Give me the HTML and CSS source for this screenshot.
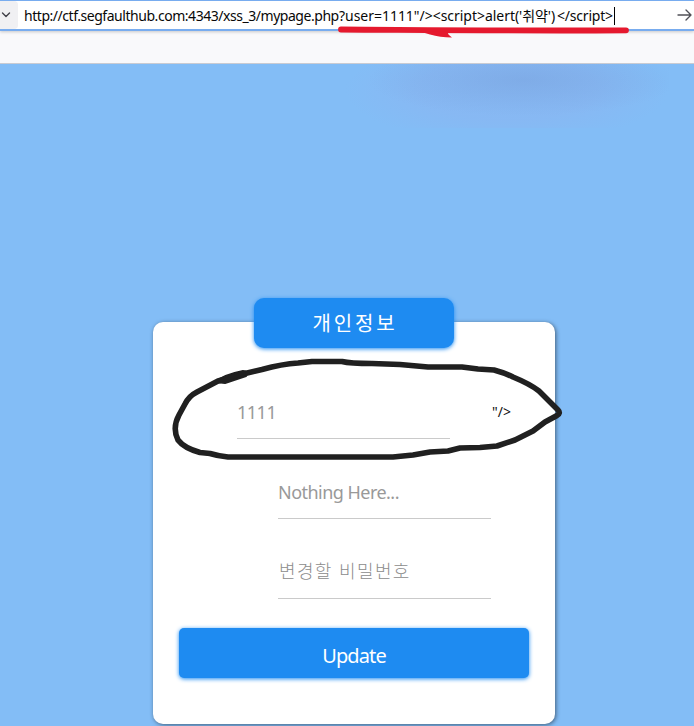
FILE: index.html
```html
<!DOCTYPE html>
<html lang="ko">
<head>
<meta charset="utf-8">
<title>개인정보</title>
<link rel="stylesheet" href="styles.css">
</head>
<body>
<header class="browser-bar">
  <div class="address">
    <div class="dropdown"><svg width="10" height="6" viewBox="0 0 10 6"><path d="M1.5 1 5 4.5 8.5 1" fill="none" stroke="#414149" stroke-width="1.4" stroke-linecap="round" stroke-linejoin="round"/></svg></div>
    <div class="url"><span class="url-host">http://ctf.segfaulthub.com:4343/xss_3/mypage.php</span><span class="url-query">?user=1111"/&gt;&lt;script&gt;</span><span class="url-call">alert('취약')</span><span class="url-end">&lt;/script&gt;</span><i class="caret"></i></div>
    <svg class="go" width="16" height="14" viewBox="0 0 16 14"><path d="M1 7H14M9 2 14 7 9 12" fill="none" stroke="#505057" stroke-width="1.35" stroke-linecap="round" stroke-linejoin="round"/></svg>
  </div>
</header>
<main class="page">
  <div class="smudge"></div>
  <form class="card">
    <h1 class="title">개인정보</h1>
    <div class="row first"><div class="field"><span class="digits">1111</span></div><span class="leak">"/&gt;</span></div>
    <div class="row"><div class="field"><span class="nothing">Nothing Here...</span></div></div>
    <div class="row"><div class="field password-field"><span class="password">변경할 비밀번호</span></div></div>
    <button class="update" type="button">Update</button>
  </form>
</main>
<svg class="marks" width="694" height="726" viewBox="0 0 694 726">
  <path class="red-line" d="M341 29.5 C430 30 525 31 626 30.3"/>
  <path class="red-tail" d="M418 31 L448 32 Q447 34 452 37.5 Q440 37.5 430 34.5Z"/>
  <path class="loop" d="M218 381 L243 374 262 369.5 Q282 364 298 363 L312 361.5 342 361.5 Q350 363.5 372 363.5 L400 364.5 428 367 462 367 478 369 494 370 Q505 373 513 377 Q530 384 539 391 L548 400 558 410 Q561 413 557 415.5 L545 422 533 431 515 440 497 446 480 447.5 460 448 448 451 430 452 413 455 393 457 228 457 Q218 456 210 453.5 L200 452.5 Q184 448 178 440 Q172 428 179 415 L185 404 Q189 396 197 392Z"/>
  <path class="loop-blob" d="M216 382 Q223 375 243 371 Q249 371 246 376 L225 383Z"/>
</svg>
</body>
</html>
```
FILE: styles.css
```css
* { box-sizing: border-box; }
body {
  margin: 0;
  height: 726px;
  display: flex;
  flex-direction: column;
  position: relative;
  overflow: hidden;
  font-family: "Noto Sans", "Noto Sans CJK KR", sans-serif;
}
.browser-bar {
  height: 64px;
  flex: none;
  background: #f9f9fb;
  border-bottom: 1px solid #c9cbd2;
}
.address {
  height: 31px;
  display: flex;
  align-items: center;
  background: #fff;
  border-top: 1px solid #78acef;
  border-bottom: 2px solid #78acef;
  box-shadow: 0 1px 3px rgba(0, 0, 0, .2);
}
.dropdown {
  width: 18px;
  height: 28px;
  padding-left: 1px;
  flex: none;
  display: flex;
  align-items: center;
  background: #f0f0f3;
  border-radius: 0 4px 4px 0;
}
.url {
  display: flex;
  align-items: center;
  flex: 1;
  margin-left: 6px;
  padding-top: 2px;
  font-size: 14px;
  line-height: 20px;
  color: #080808;
  white-space: nowrap;
}
.url-host { width: 315px; letter-spacing: -.46px; }
.url-query { width: 146px; letter-spacing: -.03px; }
.url-call { width: 72px; letter-spacing: -.05px; }
.url-end { width: 57px; letter-spacing: -.2px; }
.caret { width: 1px; height: 18px; background: #000; }
.go { flex: none; margin-right: 1px; }
.page {
  flex: 1;
  position: relative;
  padding-top: 258px;
  background: #83bdf6;
}
.smudge {
  position: absolute;
  left: 345px;
  top: 0;
  width: 324px;
  height: 64px;
  background:
    radial-gradient(ellipse 155px 36px at 55% 16px, rgba(116, 155, 215, .42), transparent),
    radial-gradient(ellipse 162px 54px at 50% 26px, rgba(143, 176, 238, .35) 55%, transparent);
}
.card {
  width: 402px;
  height: 402px;
  margin-left: 153px;
  display: flex;
  flex-direction: column;
  align-items: center;
  background: #fff;
  border-radius: 10px;
  box-shadow: 1px 1px 4px rgba(0, 0, 0, .5);
}
.title {
  width: 200px;
  height: 50px;
  flex: none;
  margin: -24px 0 41px;
  background: #1e8bf1;
  border-radius: 10px;
  box-shadow: 0 1px 4px #1e8bf1;
  color: #fff;
  font: 400 20px/50px "Noto Sans CJK KR", sans-serif;
  letter-spacing: 2.8px;
  text-indent: 2px;
  text-align: center;
}
.row {
  width: 100%;
  height: 80px;
  flex: none;
  display: flex;
  align-items: flex-start;
  padding-left: 125px;
}
.first { padding-left: 84px; }
.field {
  width: 213px;
  height: 50px;
  border-bottom: 1px solid #cacaca;
  color: #999;
  font-size: 18px;
  line-height: 46px;
  white-space: nowrap;
}
.digits { letter-spacing: -.5px; }
.nothing { letter-spacing: -.53px; }
.password-field { padding-left: 1px; line-height: 43px; }
.password { font-family: "Noto Sans CJK KR", sans-serif; letter-spacing: 1.35px; font-weight: 300; color: #8c8c8c; }
.leak { margin-left: 42px; font-size: 14px; line-height: 46px; color: #111; }
.update {
  width: 350px;
  height: 50px;
  margin-top: -1px;
  padding: 5px 0 0;
  border: 0;
  border-radius: 5px;
  background: #1e8bf1;
  box-shadow: 0 1px 4px #1e8bf1;
  color: #fff;
  font: 400 20px/40px "Noto Sans", sans-serif;
  letter-spacing: -.9px;
}
.marks { position: absolute; left: 0; top: 0; pointer-events: none; }
.red-line { fill: none; stroke: #e5192e; stroke-width: 5.8; stroke-linecap: round; }
.red-tail { fill: #e5192e; }
.loop { fill: none; stroke: #202020; stroke-width: 5.6; stroke-linejoin: round; }
.loop-blob { fill: #202020; stroke: #202020; stroke-width: 2; stroke-linejoin: round; }
```
